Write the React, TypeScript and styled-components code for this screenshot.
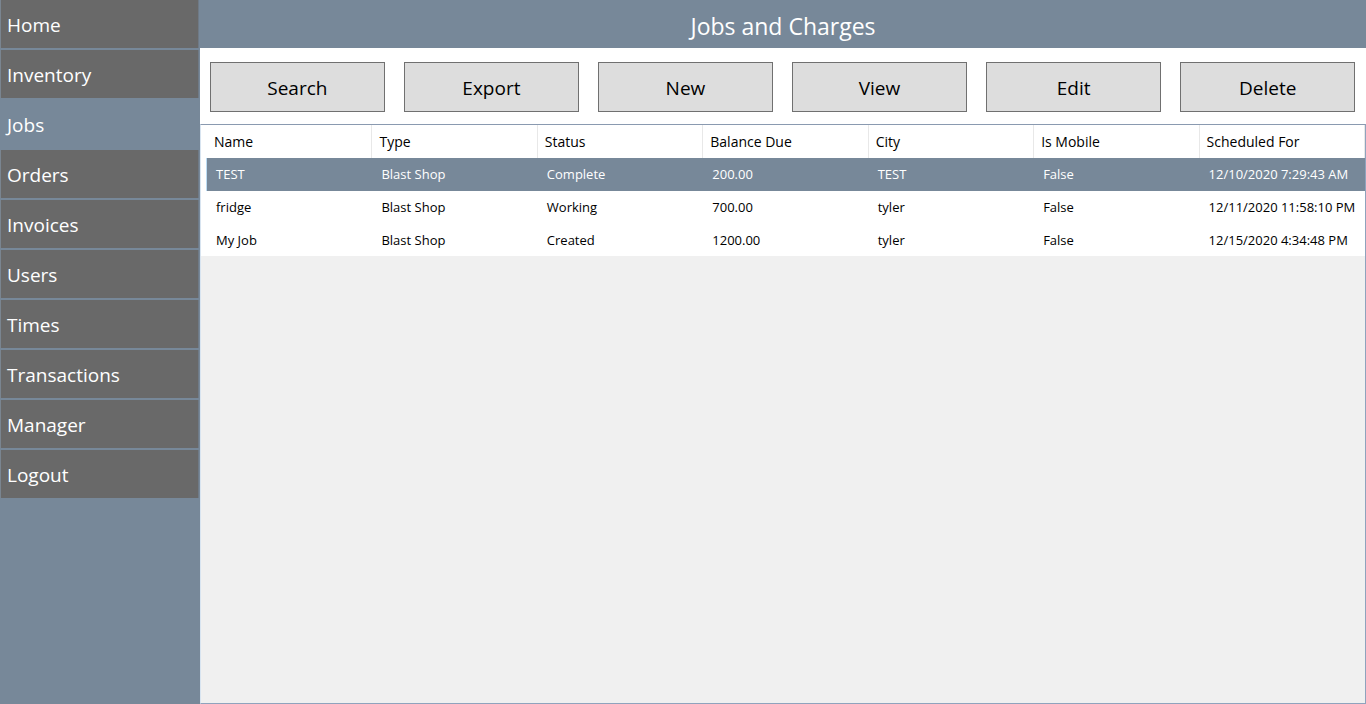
import React from "react";
import styled, { createGlobalStyle } from "styled-components";

const Global = createGlobalStyle`
  html, body { margin: 0; padding: 0; }
  body { font-family: "Open Sans", "Noto Sans", sans-serif; background: #778899; }
  * { box-sizing: border-box; }
`;

const Root = styled.div`
  display: flex;
  width: 1366px;
  height: 704px;
  overflow: hidden;
  background: #778899;
`;

const Sidebar = styled.nav`
  width: 200px;
  flex: none;
  display: flex;
  flex-direction: column;
  gap: 2px;
  background: #778899;
`;

const NavItem = styled.div<{ $active?: boolean }>`
  height: 48px;
  display: flex;
  align-items: center;
  padding: 2px 0 0 6px;
  font-size: 19px;
  color: #ffffff;
  background: ${(p) => (p.$active ? "#778899" : "#696969")};
  border-left: 1px solid ${(p) => (p.$active ? "#778899" : "#7a8590")};
  border-right: 1px solid ${(p) => (p.$active ? "#778899" : "#6f7a86")};
  width: 199px;
`;

const Main = styled.main`
  flex: 1;
  display: flex;
  flex-direction: column;
  min-width: 0;
`;

const Header = styled.header`
  height: 48px;
  flex: none;
  display: flex;
  align-items: center;
  justify-content: center;
  padding-top: 3px;
  color: #ffffff;
  font-size: 23px;
  background: #778899;
`;

const Toolbar = styled.div`
  height: 76px;
  flex: none;
  background: #ffffff;
  display: grid;
  grid-template-columns: repeat(6, 1fr);
  column-gap: 19.4px;
  padding: 14px 11px 12px 10px;
`;

const Button = styled.button`
  height: 50px;
  background: #dddddd;
  border: 1px solid #707070;
  color: #000000;
  font-family: "Open Sans", "Noto Sans", sans-serif;
  font-size: 19px;
  padding: 2px 0 0;
`;

const Grid = styled.div`
  flex: 1;
  display: flex;
  flex-direction: column;
  background: #f0f0f0;
  border-top: 1px solid #8a9ab0;
  border-left: 1px solid #d8e4f0;
  border-bottom: 1px solid #8fa3bd;
  border-right: 1px solid #8fa3bd;
`;

const Row = styled.div<{ $selected?: boolean; $head?: boolean }>`
  display: grid;
  grid-template-columns: 6px repeat(7, 1fr);
  height: ${(p) => (p.$head ? "33px" : "32.7px")};
  background: ${(p) => (p.$selected ? "#778899" : "#ffffff")};
  color: ${(p) => (p.$selected ? "#ffffff" : "#000000")};
`;

const RowHeader = styled.div<{ $selected?: boolean }>`
  background: #ffffff;
  border-right: 1px solid ${(p) => (p.$selected ? "#bcdcf4" : "#ffffff")};
`;

const HeadCell = styled.div`
  display: flex;
  align-items: center;
  padding-left: 7px;
  font-size: 14px;
  border-right: 1px solid #e8e8e8;
  white-space: nowrap;
  overflow: hidden;
`;

const Cell = styled.div`
  display: flex;
  align-items: center;
  padding-left: 9px;
  font-size: 13px;
  white-space: nowrap;
  overflow: hidden;
`;

const navItems = [
  "Home",
  "Inventory",
  "Jobs",
  "Orders",
  "Invoices",
  "Users",
  "Times",
  "Transactions",
  "Manager",
  "Logout",
];

const buttons = ["Search", "Export", "New", "View", "Edit", "Delete"];

const columns = ["Name", "Type", "Status", "Balance Due", "City", "Is Mobile", "Scheduled For"];

const rows = [
  ["TEST", "Blast Shop", "Complete", "200.00", "TEST", "False", "12/10/2020 7:29:43 AM"],
  ["fridge", "Blast Shop", "Working", "700.00", "tyler", "False", "12/11/2020 11:58:10 PM"],
  ["My Job", "Blast Shop", "Created", "1200.00", "tyler", "False", "12/15/2020 4:34:48 PM"],
];

export default function App() {
  return (
    <Root>
      <Global />
      <Sidebar>
        {navItems.map((n) => (
          <NavItem key={n} $active={n === "Jobs"}>
            {n}
          </NavItem>
        ))}
      </Sidebar>
      <Main>
        <Header>Jobs and Charges</Header>
        <Toolbar>
          {buttons.map((b) => (
            <Button key={b}>{b}</Button>
          ))}
        </Toolbar>
        <Grid>
          <Row $head>
            <RowHeader />
            {columns.map((c) => (
              <HeadCell key={c}>{c}</HeadCell>
            ))}
          </Row>
          {rows.map((r, i) => (
            <Row key={i} $selected={i === 0}>
              <RowHeader $selected={i === 0} />
              {r.map((v, j) => (
                <Cell key={j}>{v}</Cell>
              ))}
            </Row>
          ))}
        </Grid>
      </Main>
    </Root>
  );
}
